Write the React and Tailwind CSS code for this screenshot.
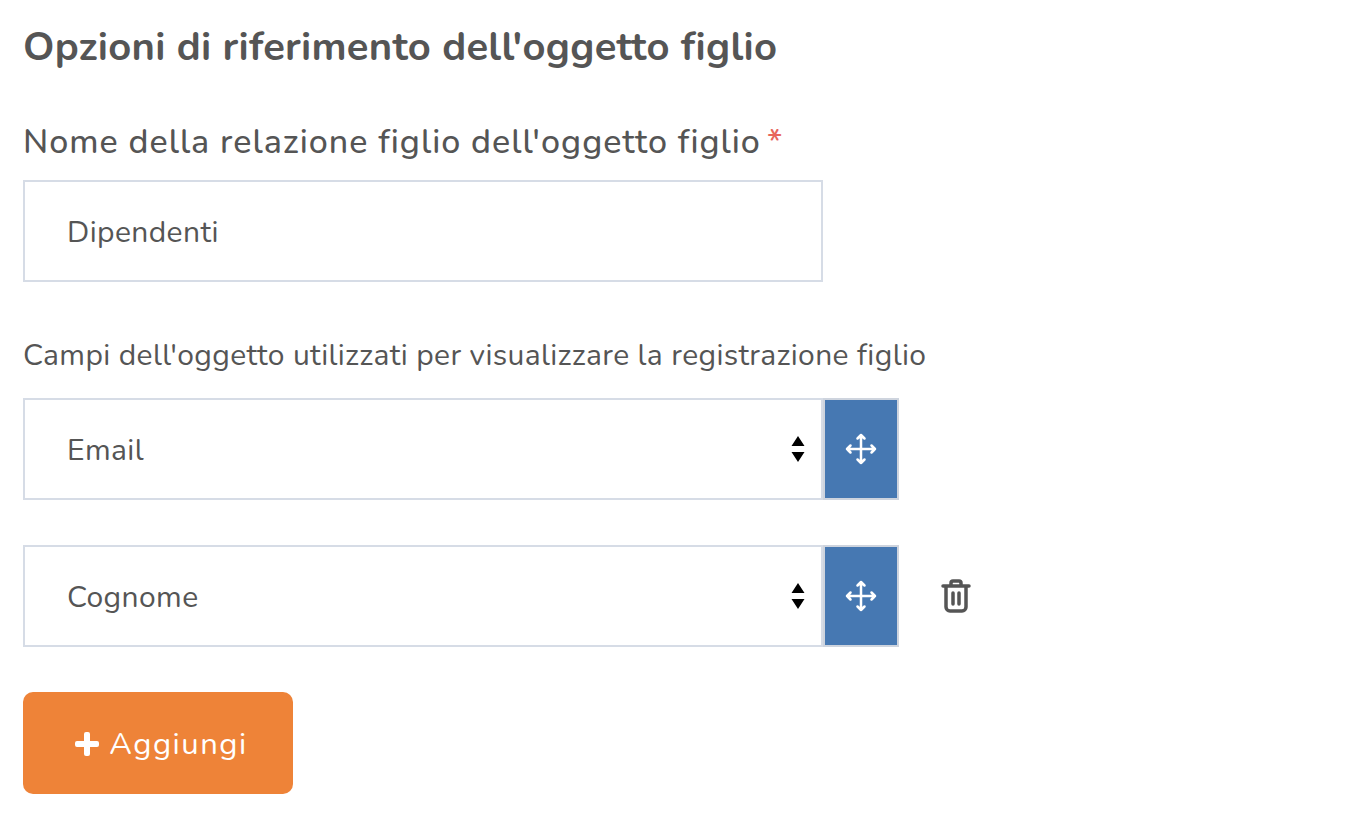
const MoveIcon = () => (
  <svg width="32" height="32" viewBox="0 0 32 32" fill="none" stroke="currentColor" strokeWidth="2.500" strokeLinecap="round" strokeLinejoin="round">
    <path d="M16 2v28M2 16h28M12.500 5.500 16 2l3.500 3.500M12.500 26.500 16 30l3.500-3.500M5.500 12.500 2 16l3.500 3.500M26.500 12.500 30 16l-3.500 3.500" />
  </svg>
);

const SortIcon = () => (
  <svg width="14" height="26" viewBox="0 0 14 26" className="fill-black">
    <path d="M7 0l6.500 10H.5zM7 26L.5 16h13z" />
  </svg>
);

const TrashIcon = () => (
  <svg width="30" height="34" viewBox="0 0 30 34" fill="none" stroke="currentColor" strokeWidth="3.500" strokeLinecap="round" strokeLinejoin="round">
    <path d="M2 7h26M10 7V4a2 2 0 0 1 2-2h6a2 2 0 0 1 2 2v3M5 7v21a4 4 0 0 0 4 4h12a4 4 0 0 0 4-4V7M12 14v11M18 14v11" />
  </svg>
);

const SelectRow = ({ value, trash }) => (
  <div className="flex items-center">
    <div className="flex h-[102px] w-[800px] items-center justify-between border-2 border-[#d6dce6] bg-white pl-[42px] pr-[16px] text-[30px] tracking-[0.4px] text-[#555555]">
      <span className="pt-[2px]">{value}</span>
      <SortIcon />
    </div>
    <div className="flex h-[102px] w-[76px] items-center justify-center border-2 border-[#ced4de] bg-[#4678b2] pr-[1px] text-white">
      <MoveIcon />
    </div>
    {trash && (
      <div className="ml-[42px] text-[#555555]">
        <TrashIcon />
      </div>
    )}
  </div>
);

export default function App() {
  return (
    <div className="min-h-[835px] bg-white pl-[23px] pt-[22px] font-['Nunito','Lato','Open_Sans',sans-serif] text-[#555555]">
      <h2 className="text-[40px] leading-[50px] font-bold tracking-[0.25px]">Opzioni di riferimento dell'oggetto figlio</h2>
      <label className="mt-[49px] block text-[34px] leading-[42px] font-medium tracking-[1px]">
        Nome della relazione figlio dell'oggetto figlio
        <span className="ml-[6px] text-[#e8665c]">*</span>
      </label>
      <div className="mt-[17px] flex h-[102px] w-[800px] items-center border-2 border-[#d6dce6] bg-white pl-[42px] pt-[2px] text-[30px] tracking-[0.4px]">
        Dipendenti
      </div>
      <p className="mt-[56px] text-[30px] leading-[36px] tracking-[0.37px]">
        Campi dell'oggetto utilizzati per visualizzare la registrazione figlio
      </p>
      <div className="mt-[24px] flex flex-col gap-[45px]">
        <SelectRow value="Email" />
        <SelectRow value="Cognome" trash />
      </div>
      <button className="mt-[45px] flex h-[102px] w-[270px] items-center justify-center gap-[10px] rounded-[10px] bg-[#ee8338] pl-[7px] pt-[2px] text-[31px] tracking-[1.5px] text-white">
        <svg width="24" height="24" viewBox="0 0 24 24" className="fill-white">
          <path d="M9 2a2 2 0 0 1 2-2h2a2 2 0 0 1 2 2v7h7a2 2 0 0 1 2 2v2a2 2 0 0 1-2 2h-7v7a2 2 0 0 1-2 2h-2a2 2 0 0 1-2-2v-7H2a2 2 0 0 1-2-2v-2a2 2 0 0 1 2-2h7z" />
        </svg>
        Aggiungi
      </button>
    </div>
  );
}
